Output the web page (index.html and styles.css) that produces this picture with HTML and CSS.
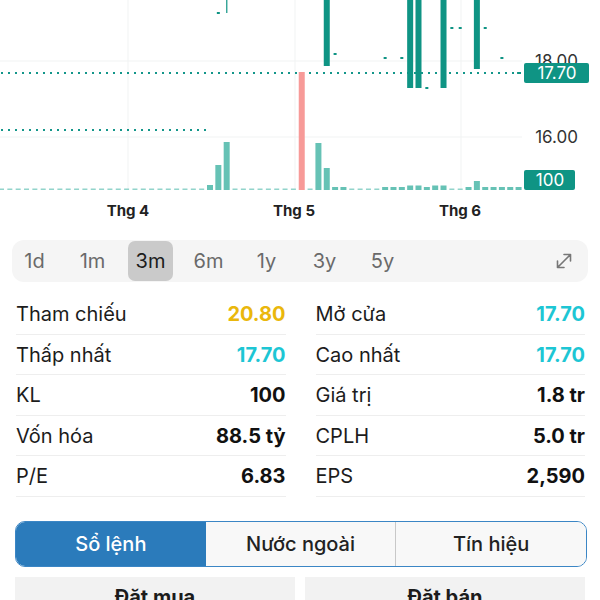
FILE: index.html
```html
<!DOCTYPE html>
<html lang="vi">
<head>
  <meta charset="UTF-8">
  <meta name="viewport" content="width=device-width, initial-scale=1.0">
  <title>Biểu đồ giá</title>
  <link rel="stylesheet" href="styles.css">
</head>
<body>
  <svg id="chart" class="chart" width="600" height="232" viewBox="0 0 600 232">
    <g class="grid">
      <line x1="128" y1="0" x2="128" y2="190"/>
      <line x1="295" y1="0" x2="295" y2="190"/>
      <line x1="461" y1="0" x2="461" y2="190"/>
      <line x1="0" y1="61" x2="522" y2="61"/>
      <line x1="0" y1="137" x2="522" y2="137"/>
    </g>
    <line class="ref-line" x1="1" y1="130" x2="206" y2="130"/>
    <line class="ref-line" x1="1" y1="73" x2="522" y2="73"/>
    <g id="volume"></g>
    <g id="candles"></g>

    <text class="axis" x="578" y="67">18.00</text>
    <text class="axis" x="578" y="143">16.00</text>

    <rect class="tag" x="524" y="63" width="65" height="20" rx="2"/>
    <text class="tag-text" x="557" y="79">17.70</text>
    <rect class="tag" x="524" y="170" width="51" height="20" rx="2"/>
    <text class="tag-text" x="550" y="186">100</text>

    <text class="month" x="128" y="216">Thg 4</text>
    <text class="month" x="294" y="216">Thg 5</text>
    <text class="month" x="460" y="216">Thg 6</text>
  </svg>

  <div class="ranges">
    <span class="range">1d</span>
    <span class="range">1m</span>
    <span class="range active">3m</span>
    <span class="range">6m</span>
    <span class="range">1y</span>
    <span class="range">3y</span>
    <span class="range">5y</span>
    <svg class="expand" width="20" height="20" viewBox="0 0 20 20">
      <path d="M3.5 16.5 L16.5 3.5 M10 3.5 H16.5 V10 M3.5 10 V16.5 H10"/>
    </svg>
  </div>

  <div class="stats">
    <div class="stat"><span>Tham chiếu</span><b class="gold">20.80</b></div>
    <div class="stat"><span>Mở cửa</span><b class="cyan">17.70</b></div>
    <div class="stat"><span>Thấp nhất</span><b class="cyan">17.70</b></div>
    <div class="stat"><span>Cao nhất</span><b class="cyan">17.70</b></div>
    <div class="stat"><span>KL</span><b>100</b></div>
    <div class="stat"><span>Giá trị</span><b>1.8 tr</b></div>
    <div class="stat"><span>Vốn hóa</span><b>88.5 tỷ</b></div>
    <div class="stat"><span>CPLH</span><b>5.0 tr</b></div>
    <div class="stat"><span>P/E</span><b>6.83</b></div>
    <div class="stat"><span>EPS</span><b>2,590</b></div>
  </div>

  <div class="tabs">
    <div class="tab active">Sổ lệnh</div>
    <div class="tab">Nước ngoài</div>
    <div class="tab">Tín hiệu</div>
  </div>

  <div class="sides">
    <div class="side">Đặt mua</div>
    <div class="side">Đặt bán</div>
  </div>

  <script>
    const NS = 'http://www.w3.org/2000/svg';
    const step = 8.34;
    const cx = i => 1.5 + step * i;
    const base = 190;

    // volume per day (px), days not listed get a hairline
    const vol = {25: 5, 26: 25, 27: 48, 36: 118, 38: 47, 39: 22, 40: 3, 41: 3,
      46: 3, 47: 3, 48: 3, 49: 4.5, 50: 4.5, 51: 3, 52: 4.5, 53: 4.5,
      56: 3, 57: 9, 58: 3, 59: 3, 60: 3, 61: 3, 62: 3};
    const down = [36];

    // candle bodies [top, bottom] and doji ticks
    const bodies = {39: [0, 66], 49: [0, 88], 50: [0, 88], 53: [0, 88], 57: [0, 69]};
    const ticks = {26: 13, 40: 54, 46: 58, 48: 58, 51: 88, 54: 28, 55: 28, 58: 28, 60: 58, 62: 73};

    function rect(parent, cls, x, y, w, h) {
      const r = document.createElementNS(NS, 'rect');
      r.setAttribute('class', cls);
      r.setAttribute('x', x);
      r.setAttribute('y', y);
      r.setAttribute('width', w);
      r.setAttribute('height', h);
      parent.appendChild(r);
    }

    const volume = document.getElementById('volume');
    for (let i = 0; i <= 62; i++) {
      const h = vol[i];
      if (!h) {
        rect(volume, 'vol-hair', cx(i) - 2.5, base - 1.5, 5, 1.5);
      } else {
        rect(volume, down.includes(i) ? 'vol-down' : 'vol-up', cx(i) - 3, base - h, 6, h);
      }
    }

    const candles = document.getElementById('candles');
    for (const i in bodies) {
      const [top, bottom] = bodies[i];
      rect(candles, 'body', cx(i) - 3, top, 6, bottom - top);
    }
    for (const i in ticks) {
      rect(candles, 'body', cx(i) - 1.5, ticks[i] - 1, 3, 2);
    }
    rect(candles, 'body', cx(27) - 0.5, 0, 1.2, 13);
  </script>
</body>
</html>
```

FILE: styles.css
```css
/* Base */
body {
  margin: 0;
  width: 600px;
  font-family: 'Inter', 'Noto Sans', sans-serif;
  background-color: #fff;
  color: #1c1c1c;
}

/* Chart */
.chart {
  display: block;
}

.grid line {
  stroke: #f1f3f3;
  stroke-width: 1;
}

.ref-line {
  stroke: #13968a;
  stroke-width: 2;
  stroke-dasharray: 2 5;
}

.vol-hair {
  fill: #92d4cb;
}

.vol-up {
  fill: #66c2b5;
}

.vol-down {
  fill: #f79a98;
}

.body {
  fill: #0f9484;
}

.axis {
  font-size: 17px;
  fill: #333;
  text-anchor: end;
}

.tag {
  fill: #0f9484;
}

.tag-text {
  font-size: 17px;
  fill: #fff;
  text-anchor: middle;
}

.month {
  font-size: 15px;
  font-weight: 700;
  fill: #222;
  text-anchor: middle;
}

/* Time range bar */
.ranges {
  display: flex;
  align-items: center;
  gap: 13px;
  height: 42px;
  margin: 8px 12px 0;
  padding: 0 14px 0 0;
  background-color: #f5f5f5;
  border-radius: 12px;
}

.range {
  display: flex;
  align-items: center;
  justify-content: center;
  width: 45px;
  height: 40px;
  font-size: 20px;
  color: #6a6a6a;
  border-radius: 7px;
}

.range.active {
  background-color: #cacaca;
  color: #1c1c1c;
}

.expand {
  margin-left: auto;
}

.expand path {
  fill: none;
  stroke: #777;
  stroke-width: 1.6;
  stroke-linecap: round;
  stroke-linejoin: round;
}

/* Stats */
.stats {
  display: grid;
  grid-template-columns: 1fr 1fr;
  column-gap: 30px;
  margin: 12px 15px 0 16px;
}

.stat {
  display: flex;
  justify-content: space-between;
  align-items: center;
  box-sizing: border-box;
  height: 40.5px;
  padding-top: 1px;
  border-bottom: 1px solid #eeeeee;
  font-size: 20px;
}

.stat b {
  font-weight: 700;
  color: #111;
}

.stat b.gold {
  color: #eab70c;
}

.stat b.cyan {
  color: #1dc6d4;
}

/* Tabs */
.tabs {
  display: flex;
  height: 44px;
  margin: 24px 13px 0 15px;
  border: 1.5px solid #3b86c5;
  border-radius: 10px;
  overflow: hidden;
}

.tab {
  flex: 1;
  display: flex;
  align-items: center;
  justify-content: center;
  font-size: 20px;
  font-weight: 500;
  background-color: #f8f8f8;
  color: #222;
}

.tab + .tab {
  border-left: 1px solid #c8c8c8;
}

.tab.active {
  background-color: #2b7bbb;
  color: #fff;
}

.tab.active + .tab {
  border-left: none;
}

/* Buy / sell headers */
.sides {
  display: grid;
  grid-template-columns: 1fr 1fr;
  gap: 10px;
  margin: 10px 15px 0;
}

.side {
  display: flex;
  align-items: center;
  justify-content: center;
  height: 40px;
  background-color: #f2f2f2;
  font-size: 20px;
  font-weight: 700;
}
```
